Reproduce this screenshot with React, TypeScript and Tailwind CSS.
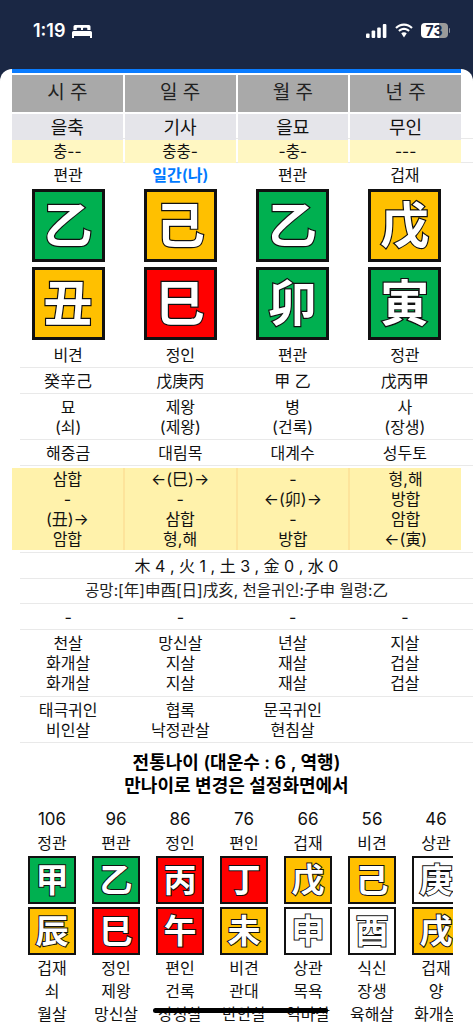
import React from "react";

const Line = () => <div className="ml-5 h-px bg-[#e9e9e9]" />;

const cols = (items: React.ReactNode[], h: string) => (
  <div className={`grid grid-cols-4 px-3 ${h}`}>
    {items.map((t, i) => (
      <div key={i} className="flex flex-col items-center justify-center whitespace-nowrap">
        {t}
      </div>
    ))}
  </div>
);

const Stack = ({ lines }: { lines: string[] }) => (
  <>
    {lines.map((l, i) => (
      <div key={i} className="h-5 leading-5">
        {l}
      </div>
    ))}
  </>
);

const color: Record<string, string> = {
  g: "bg-[#00b050]",
  y: "bg-[#ffc000]",
  r: "bg-[#ff0000]",
  w: "bg-white",
};

const BigBox = ({ c, t }: { c: string; t: string }) => (
  <div
    className={`flex h-[73px] w-[73px] items-center justify-center border-[3px] border-[#111] text-[49px] font-bold leading-none text-white [-webkit-text-stroke:2.4px_#111] [paint-order:stroke_fill] ${color[c]}`}
  >
    {t}
  </div>
);

const SmallBox = ({ c, t }: { c: string; t: string }) => (
  <div
    className={`flex h-12 w-12 shrink-0 items-center justify-center border-2 border-[#111] text-[33px] font-bold leading-none text-white [-webkit-text-stroke:2px_#111] [paint-order:stroke_fill] ${color[c]}`}
  >
    {t}
  </div>
);

const luck = [
  ["106", "정관", "g", "甲", "y", "辰", "겁재", "쇠", "월살"],
  ["96", "편관", "g", "乙", "r", "巳", "정인", "제왕", "망신살"],
  ["86", "정인", "r", "丙", "r", "午", "편인", "건록", "장성살"],
  ["76", "편인", "r", "丁", "y", "未", "비견", "관대", "반안살"],
  ["66", "겁재", "y", "戊", "w", "申", "상관", "목욕", "역마살"],
  ["56", "비견", "y", "己", "w", "酉", "식신", "장생", "육해살"],
  ["46", "상관", "w", "庚", "y", "戌", "겁재", "양", "화개살"],
];

const T = ({ children }: { children: React.ReactNode }) => (
  <div className="flex h-[23px] w-12 items-center justify-center whitespace-nowrap">{children}</div>
);

export default function App() {
  const top = [
    ["시 주", "을축", "충--", "편관", "g", "乙", "y", "丑", "비견"],
    ["일 주", "기사", "충충-", "일간(나)", "y", "己", "r", "巳", "정인"],
    ["월 주", "을묘", "-충-", "편관", "g", "乙", "g", "卯", "편관"],
    ["년 주", "무인", "---", "겁재", "y", "戊", "g", "寅", "정관"],
  ];
  return (
    <div className="relative h-[1024px] w-[473px] overflow-hidden bg-[#1a2744] font-['Inter','Noto_Sans_CJK_KR',sans-serif] text-[16px] text-[#111]">
      {/* status bar */}
      <div className="flex h-[69px] items-start justify-between pl-[33px] pr-[23px] pt-5 text-white">
        <div className="flex items-center gap-[7px]">
          <span className="text-[18px] font-semibold leading-[22px]">1:19</span>
          <svg width="20" height="13" viewBox="0 0 20 13" fill="white">
            <path d="M3 0h14a1.5 1.5 0 0 1 1.5 1.5V5h-3.2V3.6a.8.8 0 0 0-.8-.8h-2.7a.8.8 0 0 0-.8.8V5H9V3.6a.8.8 0 0 0-.8-.8H5.5a.8.8 0 0 0-.8.8V5H1.5V1.5A1.5 1.5 0 0 1 3 0z" />
            <path d="M1.5 6h17A1.5 1.5 0 0 1 20 7.5V13h-2v-2H2v2H0V7.5A1.5 1.5 0 0 1 1.5 6z" />
          </svg>
        </div>
        <div className="flex items-center gap-[7px] pt-[3px]">
          <svg width="21" height="14" viewBox="0 0 21 14" fill="white">
            <rect x="0" y="9.5" width="3.6" height="4.5" rx="1" />
            <rect x="5.6" y="6.5" width="3.6" height="7.5" rx="1" />
            <rect x="11.2" y="3.5" width="3.6" height="10.5" rx="1" />
            <rect x="16.8" y="0" width="3.6" height="14" rx="1" />
          </svg>
          <svg width="20" height="15" viewBox="0 0 19 14" fill="white">
            <path d="M9.5 2.6c2.7 0 5.1 1 6.9 2.8l1.4-1.5C15.6 1.7 12.7.4 9.5.4S3.4 1.7 1.2 3.9l1.4 1.5C4.4 3.6 6.8 2.6 9.5 2.6z" />
            <path d="M9.5 6.6c1.6 0 3 .6 4.1 1.6l1.4-1.5C13.5 5.3 11.6 4.4 9.5 4.4S5.5 5.3 4 6.7l1.4 1.5c1.1-1 2.5-1.6 4.1-1.6z" />
            <path d="M9.5 8.6c-1 0-1.9.4-2.6 1L9.5 13.6l2.6-4c-.7-.6-1.6-1-2.6-1z" />
          </svg>
          <div className="flex items-center">
            <div className="flex h-[15px] w-[27px] items-center justify-center rounded-[4px] bg-[linear-gradient(90deg,#fff_68%,#9a9a9a_68%)] text-[14px] font-bold leading-none text-[#1a2744]">
              73
            </div>
            <div className="ml-px h-[5px] w-[1.5px] rounded-r bg-[#8a8f9c]" />
          </div>
        </div>
      </div>

      {/* sheet */}
      <div className="h-[955px] rounded-t-[12px] bg-white">
        <div className="mx-3 h-1 bg-[#0a7cff]" />
        <div className="mt-[2px] grid h-[37px] grid-cols-4 gap-[2px] px-3">
          {top.map((c) => (
            <div key={c[0]} className="flex items-center justify-center bg-[#a9a9a9] text-[19px] text-[#222]">
              {c[0]}
            </div>
          ))}
        </div>
        <div className="mt-[2px] grid h-6 grid-cols-4 gap-[2px] px-3">
          {top.map((c) => (
            <div key={c[0]} className="flex items-center justify-center bg-[#e5e5ea] text-[18px]">
              {c[1]}
            </div>
          ))}
        </div>
        <Line />
        <div className="mt-px grid h-[22px] grid-cols-4 gap-[2px] px-3">
          {top.map((c) => (
            <div key={c[0]} className="flex items-center justify-center bg-[#fff7c2] text-[15.5px]">
              {c[2]}
            </div>
          ))}
        </div>
        <Line />
        <div className="mb-px grid h-[25px] grid-cols-4 px-3 pb-[2px]">
          {top.map((c, i) => (
            <div
              key={c[0]}
              className={`flex items-center justify-center ${i === 1 ? "font-semibold text-[#007aff]" : ""}`}
            >
              {c[3]}
            </div>
          ))}
        </div>
        <div className="grid grid-cols-4 px-3">
          {top.map((c) => (
            <div key={c[0]} className="flex flex-col items-center gap-[5px]">
              <BigBox c={c[4]} t={c[5]} />
              <BigBox c={c[6]} t={c[7]} />
            </div>
          ))}
        </div>
        {cols(top.map((c) => c[8]), "h-[27px] pt-[3px]")}
        <Line />
        {cols(["癸辛己", "戊庚丙", "甲 乙", "戊丙甲"], "h-[25px]")}
        <Line />
        {cols(
          [
            <Stack lines={["묘", "(쇠)"]} />,
            <Stack lines={["제왕", "(제왕)"]} />,
            <Stack lines={["병", "(건록)"]} />,
            <Stack lines={["사", "(장생)"]} />,
          ],
          "h-[45px]"
        )}
        <Line />
        {cols(["해중금", "대림목", "대계수", "성두토"], "h-[25px]")}
        <Line />
        <div className="mx-3 mt-[2px] grid h-[82px] grid-cols-4 gap-[2px] bg-[#fde49b]">
          {[
            ["삼합", "-", "(丑)→", "암합"],
            ["←(巳)→", "-", "삼합", "형,해"],
            ["-", "←(卯)→", "-", "방합"],
            ["형,해", "방합", "암합", "←(寅)"],
          ].map((l, i) => (
            <div key={i} className="flex flex-col items-center justify-center bg-[#fff2ab]">
              <Stack lines={l} />
            </div>
          ))}
        </div>
        <div className="mt-[2px]">
          <Line />
        </div>
        <div className="flex h-[25px] items-center justify-center">木 4 , 火 1 , 土 3 , 金 0 , 水 0</div>
        <Line />
        <div className="flex h-6 items-center justify-center text-[15.5px] text-[#222]">공망:[年]申酉[日]戌亥, 천을귀인:子申 월령:乙</div>
        <Line />
        {cols(["-", "-", "-", "-"], "h-[25px]")}
        <Line />
        {cols(
          [
            <Stack lines={["천살", "화개살", "화개살"]} />,
            <Stack lines={["망신살", "지살", "지살"]} />,
            <Stack lines={["년살", "재살", "재살"]} />,
            <Stack lines={["지살", "겁살", "겁살"]} />,
          ],
          "h-[66px]"
        )}
        <Line />
        {cols(
          [
            <Stack lines={["태극귀인", "비인살"]} />,
            <Stack lines={["협록", "낙정관살"]} />,
            <Stack lines={["문곡귀인", "현침살"]} />,
            "",
          ],
          "h-[45px]"
        )}
        <Line />
        <div className="mt-2 text-center text-[18px] font-semibold leading-[23px] text-black">
          <div>전통나이 (대운수 : 6 , 역행)</div>
          <div>만나이로 변경은 설정화면에서</div>
        </div>

        {/* luck */}
        <div className="ml-7 mt-[11px] flex w-[425px] gap-4 overflow-hidden">
          {luck.map((c) => (
            <div key={c[0]} className="flex w-12 shrink-0 flex-col items-center">
              <div className="flex h-[23px] items-center text-[17px]">{c[0]}</div>
              <T>{c[1]}</T>
              <div className="mt-[2px] flex flex-col gap-[3px]">
                <SmallBox c={c[2]} t={c[3]} />
                <SmallBox c={c[4]} t={c[5]} />
              </div>
              <div className="mt-px" />
              <T>{c[6]}</T>
              <T>{c[7]}</T>
              <T>{c[8]}</T>
            </div>
          ))}
        </div>
      </div>

      {/* home indicator */}
      <div className="absolute left-[153px] top-[1008px] h-[5px] w-[175px] rounded-full bg-black" />
    </div>
  );
}
